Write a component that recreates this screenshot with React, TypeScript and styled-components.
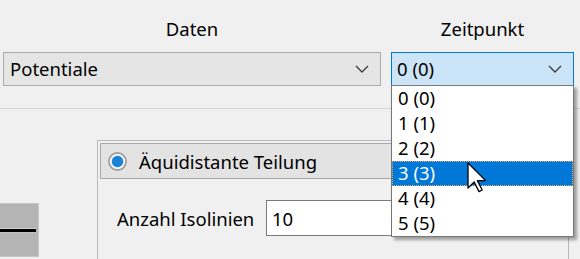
import styled, { createGlobalStyle } from "styled-components";

const GlobalStyle = createGlobalStyle`
    html, body {
        margin: 0;
        padding: 0;
        background: #f0f0f0;
    }
    body {
        font-family: "Noto Sans", "DejaVu Sans", sans-serif;
        font-size: 18.5px;
        color: #000;
    }
`

const timeOptions = ["0 (0)", "1 (1)", "2 (2)", "3 (3)", "4 (4)", "5 (5)"]
const hoveredIndex = 3

function Chevron() {
    return (
        <svg width="14" height="8" viewBox="0 0 14 8">
            <path d="M1 1 L7 7 L13 1" fill="none" stroke="#404040" strokeWidth="1.4" />
        </svg>
    )
}

function RadioDot() {
    return (
        <svg width="19" height="19" viewBox="0 0 19 19">
            <circle cx="9.5" cy="9.5" r="8.6" fill="#f4f4f4" stroke="#9a9a9a" strokeWidth="1.6" />
            <circle cx="9.5" cy="9.5" r="5.7" fill="#1883d7" />
        </svg>
    )
}

function Pointer() {
    return (
        <svg width="20" height="31" viewBox="0 0 20 31">
            <path
                d="M1 1 L1 26 L7.2 20 L12 29.6 L15.2 28 L10.4 18.6 L18.6 18.6 Z"
                fill="#fff"
                stroke="#000"
                strokeWidth="1.3"
                strokeLinejoin="round"
            />
        </svg>
    )
}

export default function App() {
    return (
        <Page>
            <GlobalStyle />
            <TopGrid>
                <Field>
                    <FieldLabel>Daten</FieldLabel>
                    <ComboWrap>
                        <Combo>
                            <span>Potentiale</span>
                            <Chevron />
                        </Combo>
                    </ComboWrap>
                </Field>
                <Field>
                    <FieldLabel>Zeitpunkt</FieldLabel>
                    <ComboWrap>
                        <Combo $open>
                            <span>0 (0)</span>
                            <Chevron />
                        </Combo>
                        <DropList>
                            {timeOptions.map((option, i) => (
                                <DropItem key={option} $hovered={i === hoveredIndex}>
                                    {option}
                                </DropItem>
                            ))}
                        </DropList>
                    </ComboWrap>
                </Field>
            </TopGrid>
            <Separator />
            <Lower>
                <LineSwatch>
                    <SwatchLine />
                </LineSwatch>
                <GroupFrame>
                    <GroupHeader>
                        <RadioDot />
                        <span>Äquidistante Teilung</span>
                    </GroupHeader>
                    <FieldRow>
                        <span>Anzahl Isolinien</span>
                        <NumberInput value="10" readOnly />
                    </FieldRow>
                </GroupFrame>
            </Lower>
            <CursorLayer>
                <Pointer />
            </CursorLayer>
        </Page>
    )
}

const Page = styled.div`
    position: relative;
    width: 580px;
    height: 259px;
    overflow: hidden;
    background: #f0f0f0;
`

const TopGrid = styled.div`
    display: grid;
    grid-template-columns: 378px 183px;
    column-gap: 10px;
    padding: 18px 0 0 3px;
`

const Field = styled.div`
    display: flex;
    flex-direction: column;
`

const FieldLabel = styled.div`
    height: 22px;
    line-height: 22px;
    margin-bottom: 12px;
    text-align: center;
`

const ComboWrap = styled.div`
    position: relative;
`

const Combo = styled.div<{ $open?: boolean }>`
    box-sizing: border-box;
    height: 34px;
    display: flex;
    align-items: center;
    justify-content: space-between;
    padding: 0 11px 0 ${({ $open }) => ($open ? "5px" : "6px")};
    border: 1px solid ${({ $open }) => ($open ? "#0078d7" : "#adadad")};
    background: ${({ $open }) => ($open ? "#cce4f7" : "#e5e5e5")};
    line-height: 22px;
`

const DropList = styled.div`
    position: absolute;
    z-index: 10;
    top: 33px;
    left: 0;
    right: 0;
    border: 1px solid #767676;
    background: #fff;
    box-shadow: 3px 3px 3px rgba(0, 0, 0, 0.35);
`

const DropItem = styled.div<{ $hovered: boolean }>`
    box-sizing: border-box;
    height: 25px;
    line-height: 24px;
    padding-left: 6px;
    background: ${({ $hovered }) => ($hovered ? "#0078d7" : "transparent")};
    color: ${({ $hovered }) => ($hovered ? "#fff" : "#000")};
    outline: ${({ $hovered }) => ($hovered ? "1px dotted #f0a860" : "none")};
    outline-offset: -1px;
`

const Separator = styled.div`
    height: 1px;
    margin-top: 22px;
    background: #d7d7d7;
`

const Lower = styled.div`
    display: flex;
    align-items: flex-start;
`

const LineSwatch = styled.div`
    box-sizing: border-box;
    width: 39px;
    height: 54px;
    margin-top: 94px;
    display: flex;
    align-items: center;
    border: 1px solid #c6c6c6;
    border-left: none;
    background: #b4b4b4;
`

const SwatchLine = styled.div`
    width: 36px;
    height: 3px;
    background: #000;
    border-top: 1px solid #cfcfcf;
    border-bottom: 1px solid #c2c2c2;
`

const GroupFrame = styled.div`
    flex: 1;
    height: 200px;
    margin: 31px 11px 0 58px;
    padding: 2px;
    border: 1px solid #b9b9b9;
    border-bottom: none;
`

const GroupHeader = styled.div`
    box-sizing: border-box;
    height: 36px;
    display: flex;
    align-items: center;
    gap: 12px;
    padding-left: 7px;
    border: 1px solid #a9a9a9;
    background: #e3e3e3;
`

const FieldRow = styled.div`
    display: grid;
    grid-template-columns: 149px 220px;
    align-items: center;
    margin-top: 21px;
    padding-left: 17px;
`

const NumberInput = styled.input`
    box-sizing: border-box;
    height: 36px;
    padding: 0 0 0 5px;
    border: 1px solid #7a7a7a;
    background: #fff;
    font-family: "Noto Sans", "DejaVu Sans", sans-serif;
    font-size: 18.5px;
    color: #000;
    outline: none;
`

const CursorLayer = styled.div`
    position: absolute;
    z-index: 20;
    left: 467px;
    top: 162px;
    line-height: 0;
`
